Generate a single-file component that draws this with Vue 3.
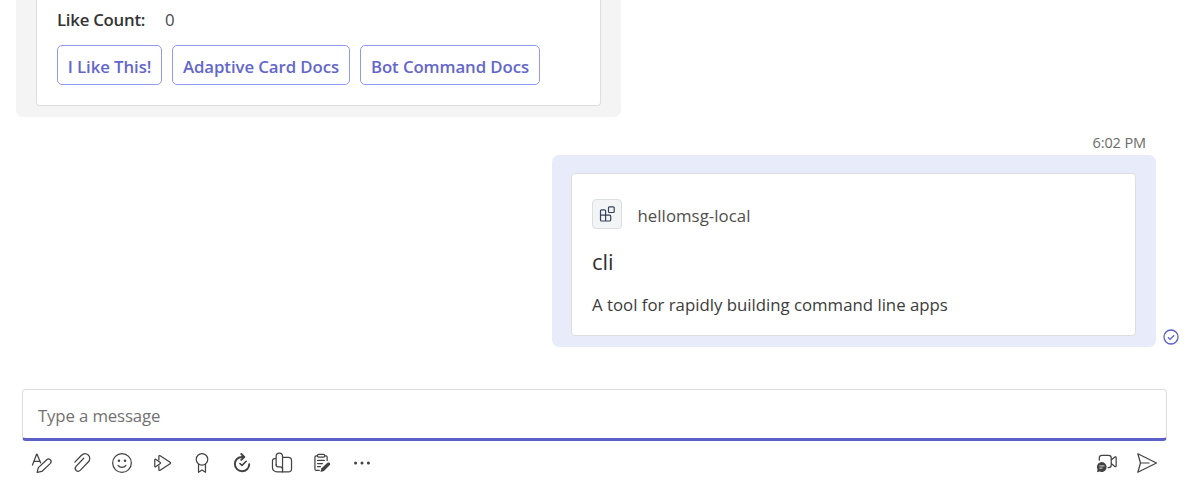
<script setup>
const actions = [
  { label: 'I Like This!', cls: 'like' },
  { label: 'Adaptive Card Docs', cls: 'adaptive' },
  { label: 'Bot Command Docs', cls: 'bot' },
]
</script>

<template>
  <div class="chat">
    <section class="bubble received">
      <div class="card">
        <div class="fact">
          <span class="fact-title">Like Count:</span>
          <span class="fact-value">0</span>
        </div>
        <div class="actions">
          <button v-for="a in actions" :key="a.label" :class="['action', a.cls]">
            <span>{{ a.label }}</span>
          </button>
        </div>
      </div>
    </section>

    <div class="stamp"><span>6:02 PM</span></div>

    <div class="sent-row">
      <section class="bubble sent">
        <div class="card">
          <div class="app">
            <div class="app-icon">
              <svg width="18" height="18" viewBox="0 0 18 18" fill="none" stroke="#34425a" stroke-width="1.2">
                <path d="M2.5 10.2V5.900q0-1.100 1.100-1.100h2.900q1.100 0 1.100 1.100v10.100M2.500 10.200v4.700q0 1.100 1.100 1.100h8q1.100 0 1.100-1.100v-3.600q0-1.100-1.100-1.100H2.500" />
                <rect x="10.5" y="1.8" width="5.7" height="5.7" rx="0.9" />
              </svg>
            </div>
            <span class="app-name">hellomsg-local</span>
          </div>
          <div class="title">cli</div>
          <div class="desc">A tool for rapidly building command line apps</div>
        </div>
      </section>
      <svg class="status" width="16" height="16" viewBox="0 0 16 16" fill="none" stroke="#5b5fc7" stroke-width="1.3">
        <circle cx="8" cy="8" r="7" />
        <path d="M4.9 8.3l2.2 2.1 4.1-4.2" />
      </svg>
    </div>

    <div class="compose"><span>Type a message</span></div>

    <div class="toolbar">
      <!-- format -->
      <svg class="ico" viewBox="0 0 24 24">
        <path d="M1.6 14.2L6.1 2.4h.5l3.9 9.4M3.2 10.3h6" />
        <path d="M6.7 22.2l1.3-5.2 9.2-8.6c2.6-2.2 6.3 1.2 4 4l-9.4 8.8z" />
      </svg>
      <!-- attach -->
      <svg class="ico" viewBox="0 0 24 24">
        <path d="M4.2 11.1l7-7.3c2.4-2.4 5.5-2.4 7.6-.5 2.2 2.1 2.2 5.3 0 7.6l-8.5 8.9c-1.4 1.4-3.4 1.5-4.7.3-1.3-1.3-1.3-3.2.1-4.7l8.2-8.6" />
      </svg>
      <!-- emoji -->
      <svg class="ico" viewBox="0 0 24 24">
        <circle cx="12" cy="12" r="10.2" />
        <path d="M7.7 14.7c2.1 2.8 6.5 2.8 8.6 0" />
        <circle class="dot" cx="8.7" cy="9.5" r="1.35" />
        <circle class="dot" cx="15.3" cy="9.5" r="1.35" />
      </svg>
      <!-- stream -->
      <svg class="ico" viewBox="0 0 24 24">
        <path d="M8.6 8.8V4.9c0-1 .6-1.3 1.4-.8l10.8 7.1c.6.4.6 1.1 0 1.5L10 19.9c-.8.5-1.4.2-1.4-.8v-3.9" />
        <path d="M4.1 8.5c0-.7.4-.9 1-.5l5 3.5c.4.3.4.7 0 1l-5 3.5c-.6.4-1 .2-1-.5z" />
      </svg>
      <!-- praise -->
      <svg class="ico" viewBox="0 0 24 24">
        <circle cx="12" cy="8" r="6.3" />
        <path d="M8.2 13.3v8.8l3.8-2.5 3.8 2.5v-8.800" />
      </svg>
      <!-- approvals -->
      <svg class="ico heavy" viewBox="0 0 24 24">
        <path d="M14.2 5.400H12c-4.500 0-7.800 3.500-7.800 7.800 0 4.400 3.500 7.800 7.900 7.800 4.300 0 7.700-3.300 7.800-7.600" />
        <path d="M11.2 2.200l3.300 3.200-3.300 3.200" />
        <path class="check" d="M9.700 12.500l2.300 2.100 4.600-4.500" />
      </svg>
      <!-- viva pages -->
      <svg class="ico" viewBox="0 0 24 24">
        <path d="M5.600 13.800V5c0-2.300 1.500-3.700 3.500-3.700s3.500 1.400 3.500 3.700v16.700H6.700c-3 0-5.100-2.100-5.100-4.900V9.800c0-1.600 1-2.600 2.400-2.600h1.600" />
        <path d="M5.600 13.800c0 1.500.9 2.300 2.200 2.300h2.100c1.600 0 2.700 1.100 2.700 2.700" />
        <path d="M12.600 5.900h6.300c2 0 3.500 1.500 3.500 3.500v8.800c0 2-1.500 3.500-3.500 3.500h-6.300" />
      </svg>
      <!-- updates -->
      <svg class="ico" viewBox="0 0 24 24">
        <path d="M7 4.300H5.600c-.8 0-1.300.5-1.300 1.300v13.200c0 .8.5 1.300 1.300 1.300H9M14.900 4.300h1.400c.8 0 1.300.5 1.300 1.300v3.600" />
        <rect x="7" y="2.7" width="8" height="3" rx="1.5" />
        <path d="M7.200 9.200h7.300M7.200 12.600h5.300M7.200 16h3" />
        <path class="dot" d="M10.300 21.800l1-3.900 6.700-6.100c1.700-1.300 3.900.8 2.600 2.500l-6.500 6.500z" />
      </svg>
      <!-- more -->
      <svg class="ico" viewBox="0 0 24 24">
        <circle class="dot" cx="5" cy="12" r="1.65" />
        <circle class="dot" cx="12" cy="12" r="1.65" />
        <circle class="dot" cx="19" cy="12" r="1.65" />
      </svg>
      <div class="spacer"></div>
      <!-- video clip -->
      <svg class="ico" viewBox="0 0 24 24">
        <path d="M3.600 9V6.400c0-1.800 1.200-2.800 2.800-2.800h7.300c1.700 0 2.900 1.200 2.900 2.900v7.800c0 1.600-1.200 2.800-2.800 2.800h-.5" />
        <path d="M16.900 8.400l3.700-2.900c.8-.6 1.400-.2 1.400.6v9c0 .8-.6 1.200-1.400.6l-3.700-2.900" />
        <path class="dot" d="M6.300 11a5.400 5.400 0 1 1-2.400 10.300L1 22l.7-3A5.400 5.400 0 0 1 6.300 11z" />
        <path class="lines" d="M4.100 15.200h4.700M4.100 17.600h2.600" />
      </svg>
      <!-- send -->
      <svg class="ico" viewBox="0 0 24 24">
        <path d="M4.900 12L2 1.900 22.300 12 2 22.100zM4.900 12h9.300" />
      </svg>
    </div>
  </div>
</template>

<style>
html,
body {
  background: #fff;
  overflow: hidden;
}
</style>

<style scoped>
.chat {
  width: 1188px;
  height: 494px;
  box-sizing: border-box;
  background: #fff;
  overflow: hidden;
  display: flex;
  flex-direction: column;
  font-family: 'Open Sans', 'Noto Sans', sans-serif;
  font-size: 16.8px;
  font-weight: 400;
  color: #3b3b3b;
  white-space: nowrap;
}
.bubble {
  box-sizing: border-box;
}
.card {
  box-sizing: border-box;
  background: #fff;
  border: 1px solid #dedede;
  border-radius: 4px;
}
.received {
  margin-left: 16px;
  width: 605px;
  height: 117px;
  flex: none;
  background: #f4f4f4;
  border-radius: 0 0 7px 7px;
  padding: 0 20px 11px;
}
.received .card {
  height: 106px;
  border-top: none;
  border-radius: 0 0 4px 4px;
  padding: 8px 20px 0;
}
.fact {
  display: flex;
  height: 24px;
  line-height: 24px;
}
.fact-title {
  width: 108px;
  font-weight: 600;
  color: #333;
  letter-spacing: -0.25px;
}
.fact-value {
  color: #4a4a4a;
}
.actions {
  display: flex;
  gap: 10px;
  margin-top: 13px;
}
.action {
  box-sizing: border-box;
  height: 40px;
  padding: 2px 0 0;
  margin: 0;
  border: 1px solid #9299f0;
  border-radius: 5px;
  background: #fff;
  color: #6367ca;
  font: inherit;
  font-weight: 600;
  letter-spacing: -0.08px;
  display: flex;
  align-items: center;
  justify-content: center;
}
.like { width: 105px; }
.adaptive { width: 178px; }
.bot { width: 180px; }
.stamp {
  height: 38px;
  flex: none;
  display: flex;
  justify-content: flex-end;
  padding: 14px 42px 0 0;
  box-sizing: border-box;
  font-size: 14.5px;
  letter-spacing: -0.1px;
  line-height: 24px;
  color: #6b6b6b;
}
.sent-row {
  display: flex;
  margin-left: 552px;
  height: 192px;
  flex: none;
  align-items: flex-end;
}
.sent {
  width: 604px;
  height: 192px;
  background: #e8ebfa;
  border-radius: 7px;
  padding: 18px 20px 11px 19px;
}
.sent .card {
  height: 163px;
  padding: 25px 20px 0;
}
.status {
  margin: 0 0 2px 7px;
}
.app {
  display: flex;
  align-items: center;
  height: 30px;
}
.app-icon {
  box-sizing: border-box;
  width: 30px;
  height: 30px;
  border: 1px solid #dcdfe2;
  border-radius: 4px;
  background: #f3f4f6;
  display: flex;
  align-items: center;
  justify-content: center;
}
.app-name {
  margin: 2px 0 0 15.5px;
  color: #504e4c;
  letter-spacing: 0.05px;
}
.title {
  margin-top: 16px;
  height: 32px;
  line-height: 32px;
  font-size: 22px;
  color: #303030;
}
.desc {
  margin-top: 16px;
  height: 24px;
  line-height: 24px;
}
.compose {
  box-sizing: border-box;
  flex: none;
  margin: 42px 21px 0 22px;
  height: 52px;
  border: 1px solid #dedede;
  border-bottom: 3px solid #5b5fc7;
  border-radius: 4px;
  padding: 2px 15px 0;
  line-height: 48px;
  color: #737170;
  letter-spacing: -0.14px;
}
.toolbar {
  display: flex;
  align-items: center;
  gap: 18px;
  margin: 11px 30px 0 31px;
  height: 22px;
}
.ico {
  width: 22px;
  height: 22px;
  flex: none;
  fill: none;
  stroke: #424242;
  stroke-width: 1.35;
  stroke-linecap: round;
  stroke-linejoin: round;
  overflow: visible;
}
.heavy {
  stroke-width: 2.1;
}
.check {
  stroke-width: 1.7;
}
.dot {
  fill: #424242;
  stroke: none;
}
.lines {
  stroke: #fff;
  stroke-width: 0.9;
}
.spacer {
  flex: 1;
}
</style>
